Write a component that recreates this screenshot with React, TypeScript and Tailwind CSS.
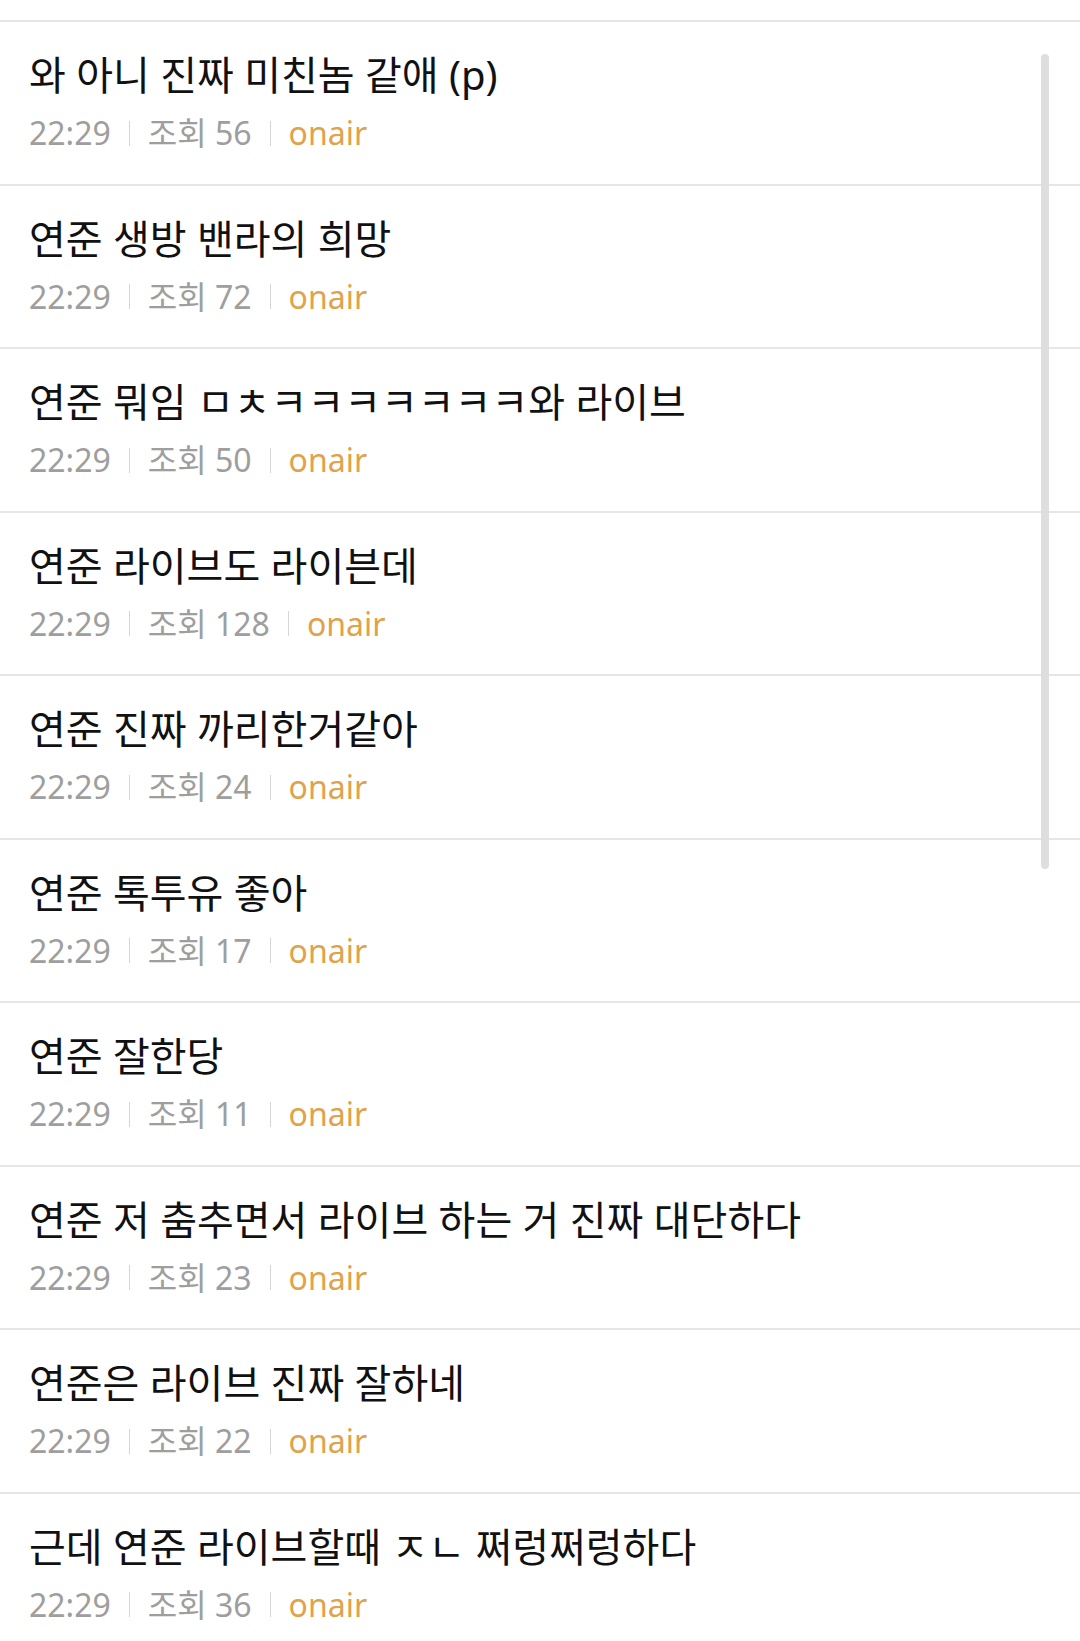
const posts = [
  { title: '와 아니 진짜 미친놈 같애 (p)', views: 56 },
  { title: '연준 생방 밴라의 희망', views: 72 },
  { title: '연준 뭐임 ㅁㅊㅋㅋㅋㅋㅋㅋㅋ와 라이브', views: 50 },
  { title: '연준 라이브도 라이븐데', views: 128 },
  { title: '연준 진짜 까리한거같아', views: 24 },
  { title: '연준 톡투유 좋아', views: 17 },
  { title: '연준 잘한당', views: 11 },
  { title: '연준 저 춤추면서 라이브 하는 거 진짜 대단하다', views: 23 },
  { title: '연준은 라이브 진짜 잘하네', views: 22 },
  { title: '근데 연준 라이브할때 ㅈㄴ 쩌렁쩌렁하다', views: 36 },
];

function Sep() {
  return <span className="mx-[18px] inline-block h-[25px] w-px bg-[#d6d6d6]" />;
}

export default function App() {
  return (
    <div
      className="relative h-[1641px] w-full overflow-hidden bg-white"
      style={{ fontFamily: '"Noto Sans", "Noto Sans CJK KR", sans-serif' }}
    >
      {/* 위에 잘린 이전 글 */}
      <div className="h-[22px] border-b-2 border-[#e6e6e6]" />

      {posts.map((p, i) => (
        <div key={i} className="h-[163.5px] border-b-2 border-[#e6e6e6] pl-[29px] pt-[29px]">
          <div className="text-[40px] leading-[48px] text-[#111111] whitespace-nowrap">{p.title}</div>
          <div className="mt-[14px] flex items-center text-[32px] leading-[40px] text-[#9e9e9e]">
            <span>22:29</span>
            <Sep />
            <span>조회 {p.views}</span>
            <Sep />
            <span className="text-[#e0a24a]">onair</span>
          </div>
        </div>
      ))}

      {/* 스크롤바 */}
      <div className="absolute left-[1041px] top-[54px] h-[815px] w-[8px] rounded-full bg-[#dedede]" />
    </div>
  );
}
